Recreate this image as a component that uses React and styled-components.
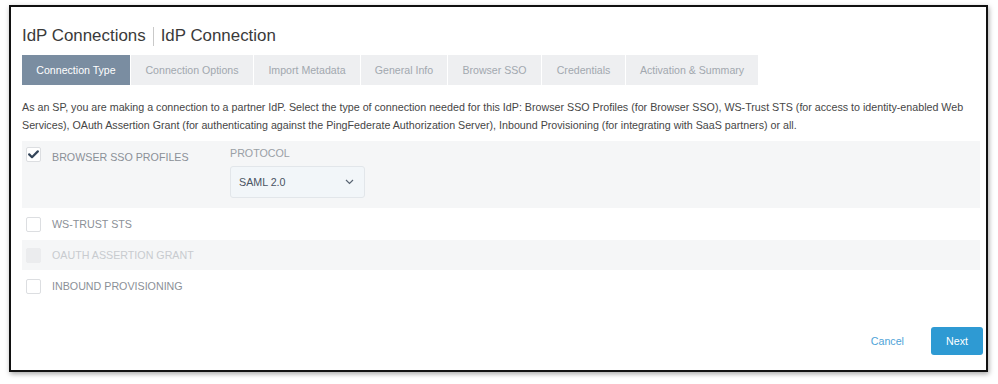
import React from "react";
import styled, { createGlobalStyle } from "styled-components";

const Global = createGlobalStyle`
  html, body { margin: 0; padding: 0; background: #fff; }
  body { font-family: "Liberation Sans", Arial, sans-serif; }
`;

const Page = styled.div`
  width: 998px;
  height: 384px;
  box-sizing: border-box;
  padding: 5px 0 0 9px;
  background: #fff;
`;

const Frame = styled.div`
  box-sizing: border-box;
  width: 979px;
  height: 367px;
  border: 2px solid #111;
  box-shadow: 1px 2px 5px rgba(0, 0, 0, 0.35);
  padding: 18px 3px 0 11px;
  display: flex;
  flex-direction: column;
  background: #fff;
`;

const Title = styled.h1`
  margin: 0;
  font-size: 16.9px;
  font-weight: normal;
  color: #3a3a3a;
  display: flex;
  align-items: center;
  height: 22px;
  gap: 7px;
`;

const Sep = styled.span`
  display: inline-block;
  width: 1px;
  height: 19px;
  background: #c9c9c9;
`;

const Tabs = styled.div`
  display: flex;
  gap: 1px;
  margin-top: 8px;
  height: 30px;
`;

const Tab = styled.div`
  display: flex;
  align-items: center;
  justify-content: center;
  width: ${(p) => p.$w}px;
  font-size: 10.6px;
  background: ${(p) => (p.$active ? "#7a8da1" : "#eeeff1")};
  color: ${(p) => (p.$active ? "#fff" : "#a2a8af")};
  white-space: nowrap;
`;

const Desc = styled.p`
  margin: 13px 3px 0 0;
  font-size: 10.7px;
  line-height: 18px;
  color: #464646;
`;

const Section = styled.div`
  display: flex;
  flex-direction: column;
  margin: 7px 3px 0 0;
`;

const Row = styled.div`
  display: flex;
  align-items: ${(p) => (p.$tall ? "flex-start" : "center")};
  background: ${(p) => (p.$shade ? "#f5f6f7" : "transparent")};
  height: ${(p) => p.$h}px;
  padding: ${(p) => (p.$tall ? "6px 0 0 4px" : "0 0 0 4px")};
  box-sizing: border-box;
  margin-bottom: 1px;
`;

const Box = styled.div`
  width: 15px;
  height: 15px;
  box-sizing: border-box;
  border: 1px solid ${(p) => (p.$disabled ? "#ebecee" : "#dcdee1")};
  background: ${(p) => (p.$disabled ? "#ebecee" : "#fff")};
  border-radius: 2px;
  display: flex;
  align-items: center;
  justify-content: center;
  flex: none;
`;

const Label = styled.span`
  margin-left: 11px;
  font-size: 10.7px;
  color: ${(p) => (p.$disabled ? "#c8cbcf" : "#8b9097")};
  width: ${(p) => (p.$w ? `${p.$w}px` : "auto")};
  padding-top: ${(p) => (p.$tall ? "4px" : "0")};
  flex: none;
`;

const Protocol = styled.div`
  display: flex;
  flex-direction: column;
  padding-top: 0;
`;

const ProtoLabel = styled.span`
  font-size: 10.7px;
  color: #9aa0a6;
  height: 13px;
`;

const Select = styled.div`
  margin-top: 6px;
  width: 135px;
  height: 32px;
  box-sizing: border-box;
  border: 1px solid #e2e6ea;
  border-radius: 3px;
  background: #f2f6f9;
  display: flex;
  align-items: center;
  justify-content: space-between;
  padding: 0 10px 0 8px;
  font-size: 10.7px;
  color: #4a5463;
`;

const Footer = styled.div`
  margin-top: auto;
  margin-bottom: 15px;
  display: flex;
  justify-content: flex-end;
  align-items: center;
  gap: 27px;
`;

const LinkButton = styled.button`
  border: none;
  background: none;
  padding: 0;
  font-family: inherit;
  font-size: 10.7px;
  color: #4ea3d8;
`;

const Primary = styled.button`
  border: none;
  border-radius: 3px;
  background: #2e9ad3;
  color: #fff;
  font-family: inherit;
  font-size: 10.7px;
  width: 52px;
  height: 28px;
  padding: 0;
`;

const Check = () => (
  <svg width="11" height="9" viewBox="0 0 11 9">
    <path d="M1.2 4.4 L4 7.2 L9.8 1.4" fill="none" stroke="#34455a" strokeWidth="2.2" strokeLinecap="round" strokeLinejoin="round" />
  </svg>
);

const Chevron = () => (
  <svg width="9" height="6" viewBox="0 0 9 6">
    <path d="M1 1 L4.5 4.5 L8 1" fill="none" stroke="#5a6573" strokeWidth="1.2" />
  </svg>
);

const tabs = [
  ["Connection Type", 108, true],
  ["Connection Options", 122],
  ["Import Metadata", 106],
  ["General Info", 86],
  ["Browser SSO", 93],
  ["Credentials", 83],
  ["Activation & Summary", 132],
];

export default function App() {
  return (
    <Page>
      <Global />
      <Frame>
        <Title>
          IdP Connections <Sep /> IdP Connection
        </Title>
        <Tabs>
          {tabs.map(([t, w, a]) => (
            <Tab key={t} $w={w} $active={a}>
              {t}
            </Tab>
          ))}
        </Tabs>
        <Desc>
          As an SP, you are making a connection to a partner IdP. Select the type of connection needed for this IdP: Browser SSO Profiles (for Browser SSO), WS-Trust STS (for access to identity-enabled Web Services), OAuth Assertion Grant (for authenticating against the PingFederate Authorization Server), Inbound Provisioning (for integrating with SaaS partners) or all.
        </Desc>
        <Section>
          <Row $shade $tall $h={67}>
            <Box>
              <Check />
            </Box>
            <Label $w={178} $tall>
              BROWSER SSO PROFILES
            </Label>
            <Protocol>
              <ProtoLabel>PROTOCOL</ProtoLabel>
              <Select>
                SAML 2.0
                <Chevron />
              </Select>
            </Protocol>
          </Row>
          <Row $h={30}>
            <Box />
            <Label>WS-TRUST STS</Label>
          </Row>
          <Row $shade $h={30}>
            <Box $disabled />
            <Label $disabled>OAUTH ASSERTION GRANT</Label>
          </Row>
          <Row $h={30}>
            <Box />
            <Label>INBOUND PROVISIONING</Label>
          </Row>
        </Section>
        <Footer>
          <LinkButton>Cancel</LinkButton>
          <Primary>Next</Primary>
        </Footer>
      </Frame>
    </Page>
  );
}
